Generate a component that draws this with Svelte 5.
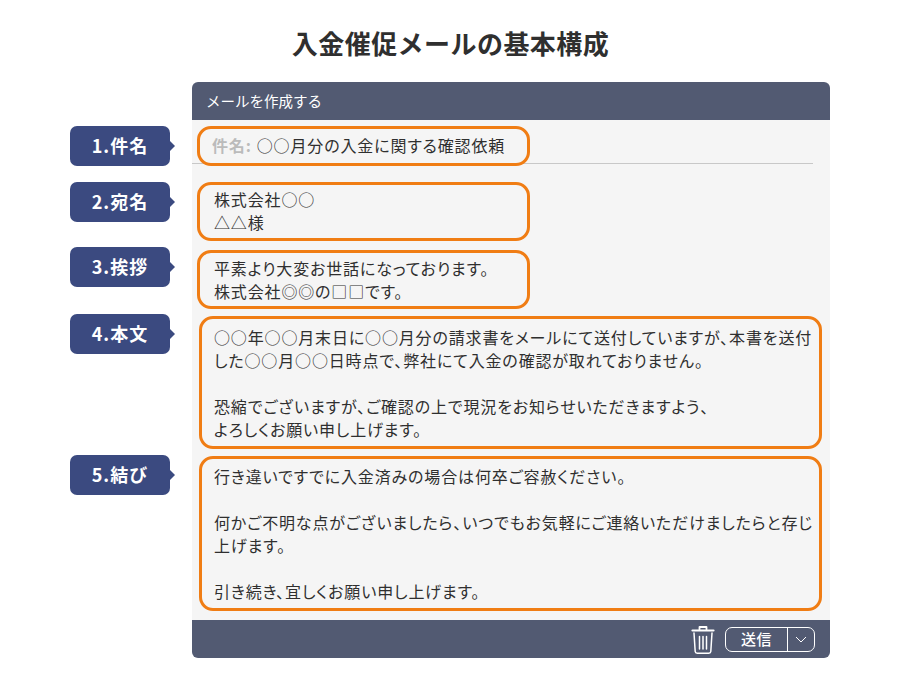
<script>
  const sections = [
    { label: '1.件名' },
    { label: '2.宛名', lines: ['株式会社○○', '△△様'] },
    { label: '3.挨拶', lines: ['平素より大変お世話になっております。', '株式会社◎◎の□□です。'] },
    {
      label: '4.本文',
      lines: [
        '○○年○○月末日に○○月分の請求書をメールにて送付していますが、本書を送付',
        'した○○月○○日時点で、弊社にて入金の確認が取れておりません。',
        '',
        '恐縮でございますが、ご確認の上で現況をお知らせいただきますよう、',
        'よろしくお願い申し上げます。'
      ]
    },
    {
      label: '5.結び',
      lines: [
        '行き違いですでに入金済みの場合は何卒ご容赦ください。',
        '',
        '何かご不明な点がございましたら、いつでもお気軽にご連絡いただけましたらと存じ',
        '上げます。',
        '',
        '引き続き、宜しくお願い申し上げます。'
      ]
    }
  ];
</script>

<main>
  <h1>入金催促メールの基本構成</h1>

  <div class="sheet">
    <div class="spacer"></div>
    <div class="head">メールを作成する</div>

    {#each sections as section, i}
      <div class="tag-cell s{i + 1}">
        <div class="tag">{section.label}</div>
      </div>
      <div class="cell s{i + 1}">
        {#if i === 0}
          <div class="subject-line">
            <div class="box subject">
              <span class="subject-label">件名:</span>
              <span>○○月分の入金に関する確認依頼</span>
            </div>
          </div>
        {:else}
          <div class="box">
            {#each section.lines as line}
              <p>{line}</p>
            {/each}
          </div>
        {/if}
      </div>
    {/each}

    <div class="spacer"></div>
    <div class="foot">
      <svg class="trash" width="24" height="30" viewBox="0 0 24 30" fill="none" stroke="#fff" stroke-width="1.5" stroke-linecap="round" stroke-linejoin="round">
        <path d="M1.5 5.500h21" stroke-width="2.200" />
        <path d="M8.500 4.500V2h7v2.500" stroke-width="1.800" />
        <path d="M3 8 4.200 26.500c.1 1.100.9 1.800 2 1.800h11.600c1.100 0 1.900-.7 2-1.800L21 8" />
        <path d="M8.500 11.500v12.500M12 11.500v12.500M15.500 11.500v12.500" />
      </svg>
      <div class="send">
        <span class="send-label">送信</span>
        <span class="send-more">
          <svg width="12" height="7" viewBox="0 0 12 7" fill="none" stroke="#fff" stroke-width="1">
            <path d="M1 1l5 5 5-5" />
          </svg>
        </span>
      </div>
    </div>
  </div>
</main>

<style>
  :global(body) {
    margin: 0;
    background: #fff;
  }

  main {
    width: 900px;
    height: 690px;
    box-sizing: border-box;
    font-family: "Noto Sans CJK JP", "Noto Sans", sans-serif;
    color: #2f2f2f;
    overflow: hidden;
  }

  h1 {
    margin: 0;
    height: 82px;
    padding-top: 24px;
    padding-left: 1px;
    box-sizing: border-box;
    font-size: 26px;
    line-height: 38px;
    font-weight: 700;
    text-align: center;
    letter-spacing: 0.45px;
  }

  .sheet {
    display: grid;
    grid-template-columns: 122px 638px;
    margin-left: 70px;
  }

  .head {
    height: 38px;
    background: #525a72;
    border-radius: 6px 6px 0 0;
    color: #fff;
    font-size: 14.500px;
    line-height: 38px;
    padding-left: 14px;
  }

  .cell {
    background: #f5f5f5;
  }

  .tag {
    position: relative;
    width: 100px;
    height: 40px;
    background: #3b4a80;
    border-radius: 7px;
    color: #fff;
    font-size: 18px;
    font-weight: 700;
    line-height: 39px;
    text-align: center;
    letter-spacing: 1px;
  }

  /* little pointer on the right of the label */
  .tag::after {
    content: '';
    position: absolute;
    left: 100px;
    top: 15px;
    border-left: 5px solid #3b4a80;
    border-top: 5px solid transparent;
    border-bottom: 5px solid transparent;
  }

  .box {
    box-sizing: border-box;
    border: 3px solid #f07d14;
    border-radius: 14px;
    font-size: 16px;
    line-height: 23px;
    letter-spacing: 0.85px;
    font-feature-settings: "palt";
    white-space: nowrap;
  }

  .box p {
    margin: 0;
    height: 23px;
  }

  .subject-line {
    height: 37px;
    margin-right: 17px;
    border-bottom: 1px solid #c8c8c8;
  }

  .subject {
    width: 333px;
    height: 40px;
    margin-left: 5px;
    padding: 5px 0 0 12px;
    display: flex;
    gap: 5px;
  }

  .subject-label {
    color: #bbb;
    font-weight: 700;
  }

  .s1.cell { padding: 6px 0 0; }
  .s1.tag-cell { padding-top: 6px; }

  .s2.cell { padding-top: 16px; }
  .s2.tag-cell { padding-top: 16px; }
  .s2 .box { margin-left: 5px; width: 333px; height: 59px; padding: 3px 0 0 14px; }

  .s3.cell { padding-top: 9px; }
  .s3.tag-cell { padding-top: 6px; }
  .s3 .box { margin-left: 5px; width: 333px; height: 59px; padding: 4px 0 0 14px; }

  .s4.cell { padding-top: 7px; }
  .s4.tag-cell { padding-top: 5px; }
  .s4 .box { margin-left: 7px; width: 623px; height: 133px; padding: 7px 0 0 12px; }

  .s5.cell { padding: 7px 0 9px; }
  .s5.tag-cell { padding-top: 6px; }
  .s5 .box { margin-left: 7px; width: 623px; height: 155px; padding: 6px 0 0 12px; }

  .foot {
    height: 38px;
    background: #525a72;
    border-radius: 0 0 6px 6px;
    display: flex;
    align-items: center;
    justify-content: flex-end;
    gap: 10px;
    padding-right: 15px;
  }

  .trash {
    margin-top: 1px;
  }

  .send {
    display: flex;
    width: 90px;
    height: 25px;
    box-sizing: border-box;
    border: 1px solid #fff;
    border-radius: 7px;
    color: #fff;
    font-size: 15px;
    line-height: 22px;
    font-weight: 500;
  }

  .send-label {
    flex: 1;
    text-align: center;
    letter-spacing: 0.5px;
  }

  .send-more {
    width: 26px;
    border-left: 1px solid #fff;
    display: flex;
    align-items: center;
    justify-content: center;
  }
</style>
